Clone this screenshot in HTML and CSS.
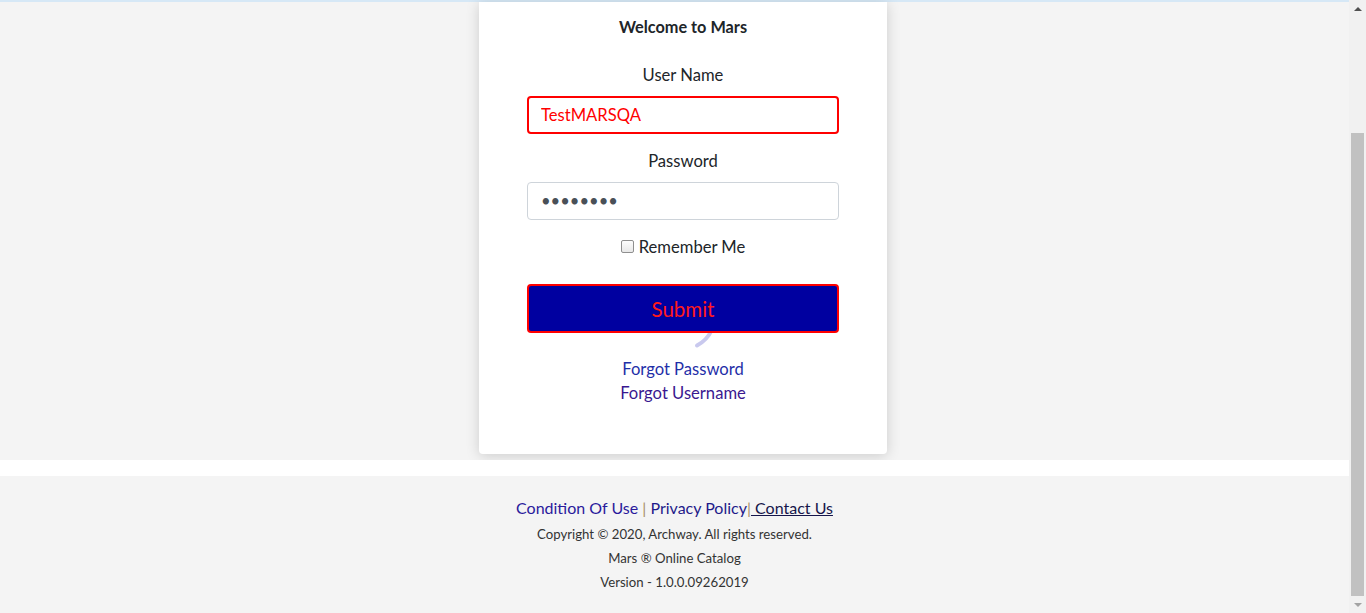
FILE: index.html
```html
<!DOCTYPE html>
<html>
<head>
<meta charset="utf-8">
<link rel="stylesheet" href="styles.css">
</head>
<body>
<div class="app">
  <div class="viewport">
    <div class="topline"></div>
    <main class="main">
      <div class="card">
        <h1 class="welcome">Welcome to Mars</h1>
        <form class="form">
          <label class="label">User Name</label>
          <input class="input input-error" type="text" value="TestMARSQA">
          <label class="label">Password</label>
          <input class="input" type="password" value="password">
          <div class="remember">
            <span class="checkbox"></span>
            <span>Remember Me</span>
          </div>
          <div class="submit-wrap">
            <svg class="spinner" width="80" height="80" viewBox="0 0 80 80">
              <path d="M 68.8 55 A 34 34 0 0 1 54 70.5" fill="none" stroke="#c9c9ee" stroke-width="4" stroke-linecap="round"/>
            </svg>
            <button type="button" class="submit">Submit</button>
          </div>
        </form>
        <div class="forgot">
          <a class="link-pw">Forgot Password</a>
          <a class="link-un">Forgot Username</a>
        </div>
      </div>
    </main>
    <div class="divider"></div>
    <footer class="footer">
      <div class="footer-links">
        <a class="f-cond">Condition Of Use</a><span class="sep"> | </span><a class="f-priv">Privacy Policy</a><span class="sep">|</span><a class="f-contact"> Contact Us</a>
      </div>
      <div class="footer-line">Copyright © 2020, Archway. All rights reserved.</div>
      <div class="footer-line">Mars ® Online Catalog</div>
      <div class="footer-line">Version - 1.0.0.09262019</div>
    </footer>
  </div>
  <div class="scrollbar">
    <div class="arrow arrow-up"></div>
    <div class="track"><div class="thumb"></div></div>
    <div class="arrow arrow-down"></div>
  </div>
</div>
</body>
</html>
```
FILE: styles.css
```css
* { box-sizing: border-box; }
html, body { margin: 0; padding: 0; }
body {
  font-family: "Lato", "Noto Sans", sans-serif;
  color: #212529;
  font-size: 16px;
  line-height: 24px;
  overflow: hidden;
}
.app {
  display: flex;
  width: 1366px;
  height: 613px;
  overflow: hidden;
}
.viewport {
  flex: 1;
  display: flex;
  flex-direction: column;
  background: #f4f4f4;
}
.topline {
  height: 2px;
  background: #d6e8f6;
  flex-shrink: 0;
}
.main {
  height: 458px;
  flex-shrink: 0;
  display: flex;
  justify-content: center;
  align-items: flex-end;
  padding-bottom: 6px;
  padding-left: 17px;
}
.card {
  width: 408px;
  height: 452px;
  background: #fff;
  border-radius: 0 0 4px 4px;
  box-shadow: 0 2px 14px rgba(0,0,0,0.16);
  text-align: center;
  padding-top: 13px;
  display: flex;
  flex-direction: column;
  align-items: center;
  font-size: 16.6px;
}
.welcome {
  margin: 0;
  font-size: 16.3px;
  font-weight: 700;
  line-height: 24px;
  color: #212529;
}
.form {
  width: 312px;
  margin-top: 24px;
  display: flex;
  flex-direction: column;
  align-items: center;
}
.label {
  display: block;
  line-height: 24px;
  margin-bottom: 9px;
}
.input {
  width: 312px;
  height: 38px;
  border: 1px solid #ced4da;
  border-radius: 4px;
  padding: 0 13px;
  font-family: inherit;
  font-size: 16.6px;
  color: #495057;
  margin-bottom: 15px;
  outline: none;
}
.input-error {
  border: 2px solid #ff0000;
  color: #ff0000;
  padding: 0 12px;
}
.remember {
  display: flex;
  align-items: center;
  gap: 5px;
  line-height: 24px;
  margin-bottom: 25px;
}
.checkbox {
  width: 13px;
  height: 13px;
  border: 1px solid #8f8f8f;
  border-radius: 2px;
  background: linear-gradient(#fdfdfd, #e8e8e8);
  margin-top: -2px;
}
.submit-wrap {
  position: relative;
  width: 312px;
}
.spinner {
  position: absolute;
  left: 116px;
  top: -9px;
  z-index: 0;
}
.submit {
  position: relative;
  z-index: 1;
  width: 312px;
  height: 49px;
  background: #0000a0;
  border: 2px solid #ff0000;
  border-radius: 4px;
  color: #ff1a1a;
  font-family: inherit;
  font-size: 20.5px;
  display: block;
  padding: 0;
}
.forgot {
  margin-top: 24px;
  display: flex;
  flex-direction: column;
  align-items: center;
}
.link-pw { color: #1f2fa8; line-height: 24px; }
.link-un { color: #3a1890; line-height: 24px; }
.divider {
  height: 16px;
  background: #fff;
  flex-shrink: 0;
}
.footer {
  flex: 1;
  background: #f4f4f4;
  padding-top: 20px;
  text-align: center;
}
.footer-links {
  font-size: 16px;
  line-height: 24px;
  margin-bottom: 2px;
}
.f-cond { color: #2a1a9c; }
.f-priv { color: #1e1a8a; }
.f-contact { color: #15154a; text-decoration: underline; }
.sep { color: #a89068; }
.footer-line {
  font-size: 13.2px;
  line-height: 24px;
  color: #333;
}
.scrollbar {
  width: 17px;
  flex-shrink: 0;
  background: #f1f1f1;
  display: flex;
  flex-direction: column;
  align-items: center;
}
.arrow {
  width: 17px;
  height: 17px;
  display: flex;
  align-items: center;
  justify-content: center;
}
.arrow-up::before {
  content: "";
  border-left: 4px solid transparent;
  border-right: 4px solid transparent;
  border-bottom: 4px solid #505050;
}
.arrow-down::before {
  content: "";
  border-left: 4px solid transparent;
  border-right: 4px solid transparent;
  border-top: 4px solid #a3a3a3;
}
.track {
  flex: 1;
  width: 17px;
  padding: 116px 2px 0 2px;
}
.thumb {
  height: 463px;
  background: #c1c1c1;
}
```
